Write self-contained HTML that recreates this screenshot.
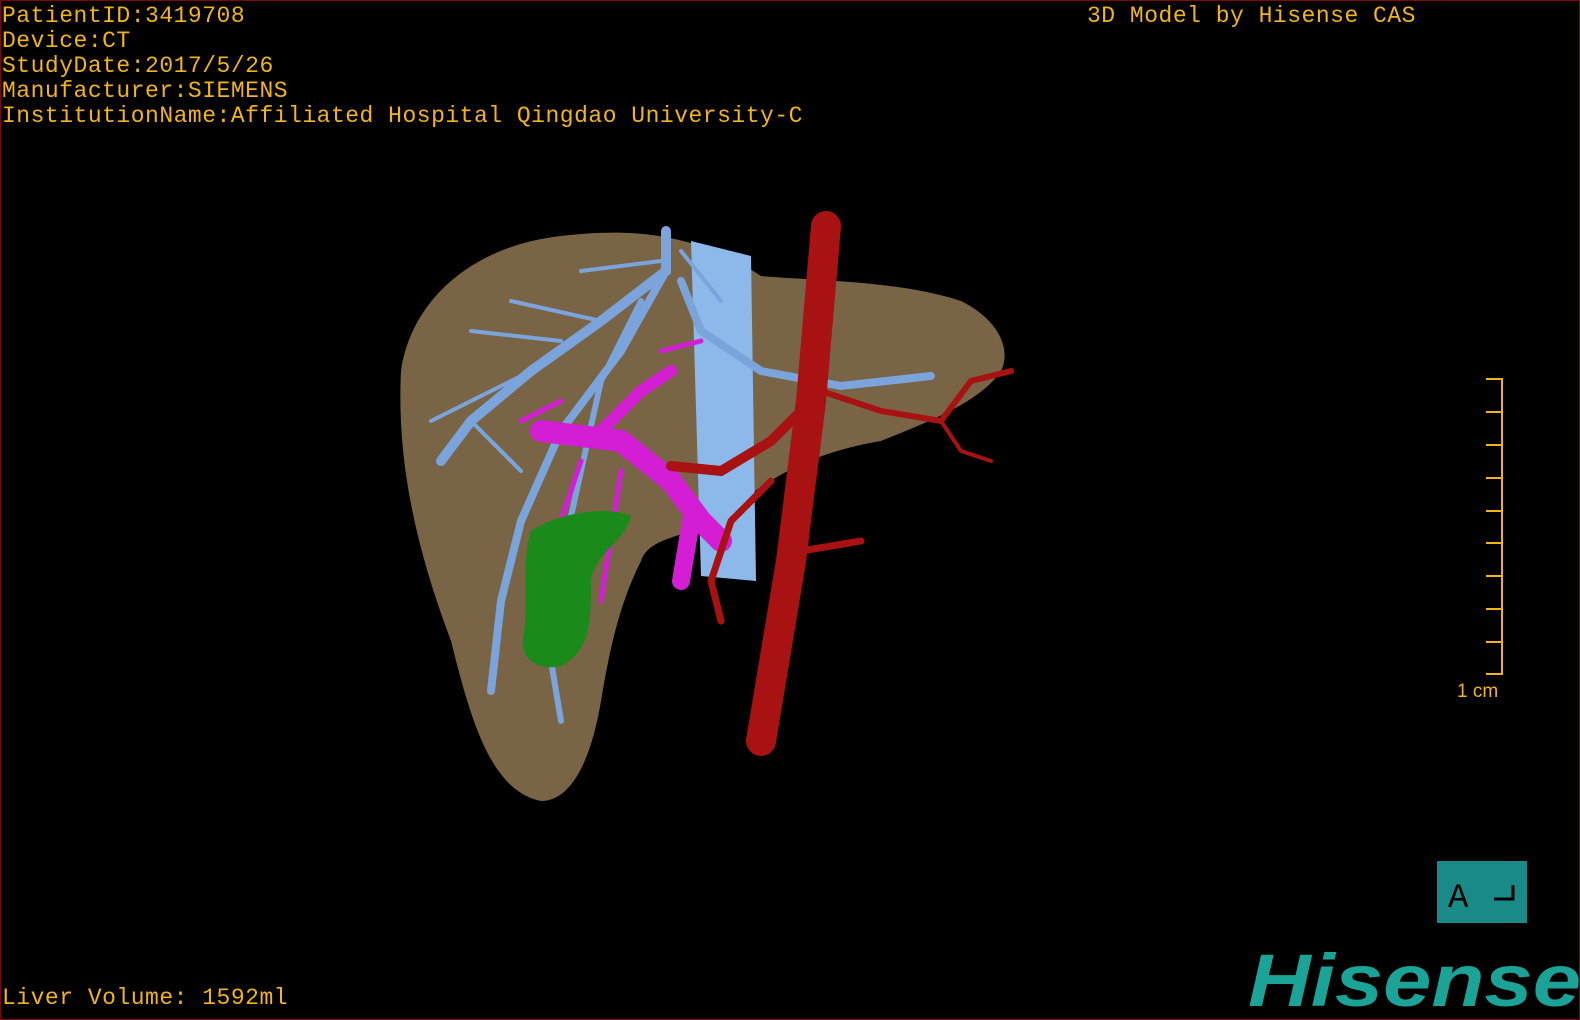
<!DOCTYPE html>
<html><head><meta charset="utf-8"><style>
html,body{margin:0;padding:0;background:#000;}
#c{position:relative;width:1580px;height:1020px;background:#000;overflow:hidden;box-sizing:border-box;border:1px solid #7a0a0a;}
.t{position:absolute;color:#f2b418;font-family:"Liberation Mono",monospace;font-size:23px;line-height:25px;white-space:pre;letter-spacing:0.5px;}
</style></head><body><div id="c">
<div class="t" style="left:1px;top:3px">PatientID:3419708
Device:CT
StudyDate:2017/5/26
Manufacturer:SIEMENS
InstitutionName:Affiliated Hospital Qingdao University-C</div>
<div class="t" style="left:1086px;top:3px">3D Model by Hisense CAS</div>
<div class="t" style="left:1px;top:985px">Liver Volume: 1592ml</div>
<svg width="1580" height="1020" style="position:absolute;left:0;top:0">
<!-- liver -->
<path d="M400,370 C410,300 470,245 560,235 C620,228 690,228 760,275 C820,280 900,280 960,300 C1000,320 1010,350 1000,370 C980,400 930,420 880,440 C820,450 780,470 740,500 C700,540 650,530 640,560 C620,600 610,640 600,700 C590,760 570,800 540,800 C490,790 470,720 450,640 C420,560 395,470 400,370 Z" fill="#7a6446"/>
<!-- IVC -->
<path d="M690,240 L750,255 L755,580 L700,575 Z" fill="#8cb8ea"/>
<!-- hepatic veins blue -->
<g stroke="#7ba4dc" fill="none" stroke-linecap="round">
<path d="M665,230 L665,270 L600,320 L530,370 L470,420 L440,460" stroke-width="10"/>
<path d="M665,270 L620,350 L560,430 L520,520 L500,600 L490,690" stroke-width="8"/>
<path d="M680,280 L700,330 L760,370 L840,385 L930,375" stroke-width="8"/>
<path d="M640,300 L600,380 L580,470 L560,560 L550,660 L560,720" stroke-width="6"/>
<path d="M600,320 L510,300 M560,340 L470,330 M530,370 L430,420 M470,420 L520,470 M660,260 L580,270 M680,250 L720,300" stroke-width="4"/>
</g>
<!-- portal magenta -->
<g stroke="#d41ed4" fill="none" stroke-linecap="round">
<path d="M540,430 L620,440 L670,480 L700,520 L720,540" stroke-width="22"/>
<path d="M690,520 L680,580" stroke-width="18"/>
<path d="M600,430 L640,390 L670,370" stroke-width="12"/>
<path d="M560,400 L520,420 M580,460 L560,520 M620,470 L600,600 M660,350 L700,340" stroke-width="5"/>
</g>
<!-- gallbladder -->
<path d="M530,530 C560,510 610,505 630,515 C625,540 595,550 590,580 C590,620 590,650 560,665 C540,670 520,660 522,640 C528,600 520,560 530,530 Z" fill="#1a8a1a"/>
<!-- aorta red -->
<g stroke="#a81212" fill="none" stroke-linecap="round">
<path d="M825,225 L810,400 L790,560 L760,740" stroke-width="30"/>
<path d="M810,400 L770,440 L720,470 L670,465" stroke-width="10"/>
<path d="M820,390 L880,410 L940,420 L970,380 L1010,370" stroke-width="6"/>
<path d="M770,480 L730,520 L710,580 L720,620" stroke-width="7"/>
<path d="M800,550 L860,540" stroke-width="7"/>
<path d="M940,420 L960,450 L990,460" stroke-width="4"/>
</g>
<!-- ruler -->
<g stroke="#f2b418" stroke-width="2" fill="none">
<path d="M1485,378 L1501,378 L1501,673 L1485,673"/>
<path d="M1485,411 H1501 M1485,444 H1501 M1485,477 H1501 M1485,510 H1501 M1485,542 H1501 M1485,575 H1501 M1485,608 H1501 M1485,641 H1501"/>
</g>
<text x="1456" y="696" fill="#f2b418" font-family="Liberation Sans,sans-serif" font-size="19">1 cm</text>
<rect x="1436" y="860" width="90" height="62" fill="#1a8a88"/>
<text x="1447" y="906" fill="#000" font-family="Liberation Mono,monospace" font-size="34">A</text>
<path d="M1493,898 L1512,898 L1512,884" stroke="#000" stroke-width="3" fill="none"/>
<text x="1247" y="1005" fill="#1aa396" font-family="Liberation Sans,sans-serif" font-size="74" font-weight="bold" font-style="italic" textLength="333" lengthAdjust="spacingAndGlyphs">Hisense</text>
</svg>
</div></body></html>
